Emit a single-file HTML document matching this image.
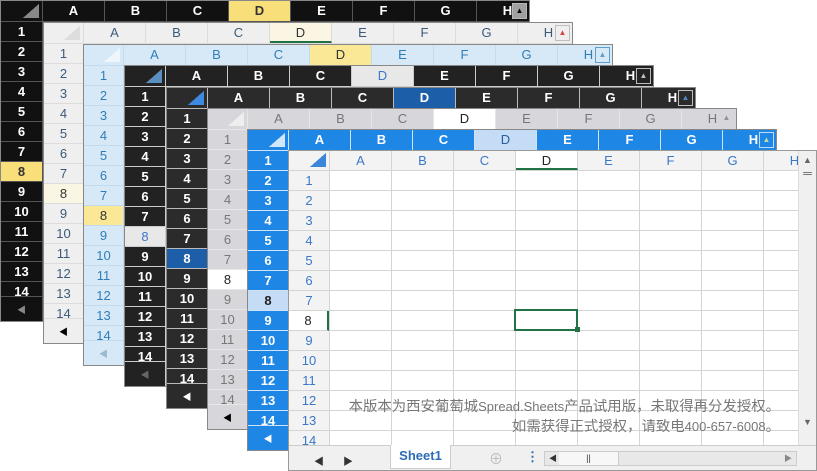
<!DOCTYPE html><html><head><meta charset="utf-8"><style>
*{box-sizing:border-box;margin:0;padding:0}
body{width:817px;height:471px;background:#fff;position:relative;overflow:hidden;font-family:"Liberation Sans","Noto Sans CJK SC",sans-serif}
.w{position:absolute;width:530px;height:322px;overflow:hidden;background:var(--bg);border:1px solid #888}
.hd{position:absolute;left:0;top:0;height:21px;width:100%;display:flex;background:var(--bg);border-bottom:1px solid var(--sep)}
.hd div{width:62px;flex:none;border-right:1px solid var(--sep);text-align:center;line-height:20px;font-size:13px;color:var(--fg);font-weight:var(--fw)}
.hd .cn{width:var(--rw);position:relative}
.cn:after{content:"";position:absolute;right:3px;bottom:3px;width:16px;height:14px;background:linear-gradient(to top left,var(--tri) 50%,transparent 51%)}
.hd .hl{background:var(--hbg);color:var(--hfg)}
.rh{position:absolute;left:0;top:21px;width:var(--rw);background:var(--bg);border-right:1px solid var(--sep)}
.rh div{height:20px;border-bottom:1px solid var(--sep);text-align:center;line-height:19px;font-size:13px;color:var(--fg);font-weight:var(--fw);overflow:hidden}
.rh div:nth-child(14){height:15px;line-height:20px}
.rh .hl{background:var(--hbg);color:var(--hfg)}
.rh .bt{height:30px;border:none;font-size:9px;line-height:26px;color:var(--fg)}
.sb{position:absolute;right:2px;top:2px;width:15px;height:16px;border:1px solid var(--fg);opacity:.7;font-size:8px;text-align:center;line-height:14px;color:var(--fg);background:var(--bg)}
</style></head><body>

<div class="w" style="left:0;top:0;--bg:#111;--fg:#fff;--fw:bold;--sep:#555;--hbg:#f8df7a;--hfg:#333;--rw:42px;--tri:#888">
<div class="hd"><div class="cn"></div><div>A</div><div>B</div><div>C</div><div class="hl">D</div><div>E</div><div>F</div><div>G</div><div>H</div></div>
<div class="rh"><div>1</div><div>2</div><div>3</div><div>4</div><div>5</div><div>6</div><div>7</div><div class="hl">8</div><div>9</div><div>10</div><div>11</div><div>12</div><div>13</div><div>14</div><div class="bt" style="color:#888">◀</div></div>
<div class="sb" style="background:#ddd;color:#000">▲</div></div>

<div class="w" style="left:43px;top:22px;--bg:#efefef;--fg:#3b5a7a;--fw:normal;--sep:#dcdcdc;--hbg:#fbf6e4;--hfg:#333;--rw:40px;--tri:#ddd">
<div class="hd"><div class="cn"></div><div>A</div><div>B</div><div>C</div><div class="hl" style="border-bottom:2px solid #217346">D</div><div>E</div><div>F</div><div>G</div><div>H</div></div>
<div class="rh"><div>1</div><div>2</div><div>3</div><div>4</div><div>5</div><div>6</div><div>7</div><div class="hl">8</div><div>9</div><div>10</div><div>11</div><div>12</div><div>13</div><div>14</div><div class="bt" style="color:#000">◀</div></div>
<div class="sb" style="color:#c00;border-color:#aaa">▲</div></div>

<div class="w" style="left:83px;top:44px;--bg:#d7e9f7;--fg:#2f7db8;--fw:normal;--sep:#c3dbee;--hbg:#fbe896;--hfg:#333;--rw:40px;--tri:#eef5fb">
<div class="hd"><div class="cn"></div><div>A</div><div>B</div><div>C</div><div class="hl">D</div><div>E</div><div>F</div><div>G</div><div>H</div></div>
<div class="rh"><div>1</div><div>2</div><div>3</div><div>4</div><div>5</div><div>6</div><div>7</div><div class="hl">8</div><div>9</div><div>10</div><div>11</div><div>12</div><div>13</div><div>14</div><div class="bt" style="color:#9bc">◀</div></div>
<div class="sb">▲</div></div>

<div class="w" style="left:124px;top:65px;--bg:#222;--fg:#fff;--fw:bold;--sep:#ccc;--hbg:#e8e8e8;--hfg:#3a78c8;--rw:41px;--tri:#5b8fc0">
<div class="hd"><div class="cn"></div><div>A</div><div>B</div><div>C</div><div class="hl" style="font-weight:normal">D</div><div>E</div><div>F</div><div>G</div><div>H</div></div>
<div class="rh"><div>1</div><div>2</div><div>3</div><div>4</div><div>5</div><div>6</div><div>7</div><div class="hl" style="font-weight:normal">8</div><div>9</div><div>10</div><div>11</div><div>12</div><div>13</div><div>14</div><div class="bt" style="color:#666">◀</div></div>
<div class="sb">▲</div></div>

<div class="w" style="left:166px;top:87px;--bg:#2b2b2b;--fg:#fff;--fw:bold;--sep:#bbb;--hbg:#1c5fa8;--hfg:#fff;--rw:41px;--tri:#3d8ae0">
<div class="hd"><div class="cn"></div><div>A</div><div>B</div><div>C</div><div class="hl">D</div><div>E</div><div>F</div><div>G</div><div>H</div></div>
<div class="rh"><div>1</div><div>2</div><div>3</div><div>4</div><div>5</div><div>6</div><div>7</div><div class="hl">8</div><div>9</div><div>10</div><div>11</div><div>12</div><div>13</div><div>14</div><div class="bt">◀</div></div>
<div class="sb" style="color:#6af">▲</div></div>

<div class="w" style="left:207px;top:108px;--bg:#d7d6db;--fg:#777;--fw:normal;--sep:#e6e6e8;--hbg:#fff;--hfg:#222;--rw:40px;--tri:#eee">
<div class="hd"><div class="cn"></div><div>A</div><div>B</div><div>C</div><div class="hl">D</div><div>E</div><div>F</div><div>G</div><div>H</div></div>
<div class="rh"><div>1</div><div>2</div><div>3</div><div>4</div><div>5</div><div>6</div><div>7</div><div class="hl">8</div><div>9</div><div>10</div><div>11</div><div>12</div><div>13</div><div>14</div><div class="bt" style="color:#000">◀</div></div>
<div class="sb" style="border:none">▲</div></div>

<div class="w" style="left:247px;top:129px;--bg:#1e86e4;--fg:#fff;--fw:bold;--sep:#cfe3f8;--hbg:#c4dcf6;--hfg:#2a5f9a;--rw:41px;--tri:#cfe6fb">
<div class="hd"><div class="cn"></div><div>A</div><div>B</div><div>C</div><div class="hl" style="font-weight:normal">D</div><div>E</div><div>F</div><div>G</div><div>H</div></div>
<div class="rh"><div>1</div><div>2</div><div>3</div><div>4</div><div>5</div><div>6</div><div>7</div><div class="hl" style="color:#222">8</div><div>9</div><div>10</div><div>11</div><div>12</div><div>13</div><div>14</div><div class="bt">◀</div></div>
<div class="sb" style="color:#ff8">▲</div></div>

<div class="w" style="left:288px;top:150px;width:529px;height:321px;background:#fff;--bg:#f3f3f3;--fg:#3a78c8;--fw:normal;--sep:#d4d4d4;--hbg:#fff;--hfg:#222;--rw:41px;--tri:#3a86d8;border-color:#999">
<div style="position:absolute;left:41px;top:20px;width:470px;height:275px;background-image:linear-gradient(to right,#d4d4d4 1px,transparent 1px),linear-gradient(to bottom,#d4d4d4 1px,transparent 1px);background-size:62px 20px;background-position:61px 19px"></div>
<div class="hd" style="height:20px;width:511px"><div class="cn"></div><div>A</div><div>B</div><div>C</div><div class="hl" style="border-bottom:2px solid #217346">D</div><div>E</div><div>F</div><div>G</div><div>H</div></div>
<div class="rh" style="top:20px"><div>1</div><div>2</div><div>3</div><div>4</div><div>5</div><div>6</div><div>7</div><div class="hl" style="border-right:2px solid #217346">8</div><div>9</div><div>10</div><div>11</div><div>12</div><div>13</div><div>14</div></div>
<div style="position:absolute;left:225px;top:158px;width:64px;height:22px;border:2px solid #217346"></div>
<div style="position:absolute;left:286px;top:176px;width:5px;height:5px;background:#217346"></div>
<div style="position:absolute;right:0;top:0;width:18px;height:295px;background:#f0f0f0;border-left:1px solid #ddd;font-size:9px;color:#666;text-align:center">
<div style="line-height:18px">▲</div><div style="line-height:8px;font-size:12px">═</div><div style="position:absolute;top:266px;width:100%">▼</div></div>
<div style="position:absolute;right:36px;top:246px;font-size:14.4px;color:#777;text-align:right;line-height:20px;white-space:nowrap">本版本为西安葡萄城<span style="font-size:13px">Spread.Sheets</span>产品试用版，未取得再分发授权。<br>如需获得正式授权，请致电<span style="font-size:13px">400-657-6008</span>。</div>
<div style="position:absolute;left:0;top:294px;width:100%;height:27px;background:#f0f0f0;border-top:1px solid #ccc;font-size:10px;color:#333">
<span style="position:absolute;left:25px;top:7px">◀</span><span style="position:absolute;left:54px;top:7px">▶</span>
<div style="position:absolute;left:101px;top:-1px;width:61px;height:24px;background:#fff;border:1px solid #ccc;border-top:none;text-align:center;line-height:22px;font-size:13px;font-weight:bold;color:#2d6bb5">Sheet1</div>
<span style="position:absolute;left:200px;top:3px;font-size:14px;color:#bbb">⊕</span>
<span style="position:absolute;left:237px;top:3px;font-size:13px;color:#2d6bb5;font-weight:bold">⋮</span>
<div style="position:absolute;left:255px;top:5px;width:253px;height:15px;background:#e8e8e8;border:1px solid #ccc">
<span style="position:absolute;left:4px;top:1px;font-size:8px">◀</span>
<div style="position:absolute;left:14px;top:0;width:60px;height:13px;background:#f7f7f7;border-right:1px solid #ccc;text-align:center;font-size:9px;line-height:13px">||</div>
<span style="position:absolute;right:4px;top:1px;font-size:8px;color:#888">▶</span></div>
</div></div>
</body></html>
